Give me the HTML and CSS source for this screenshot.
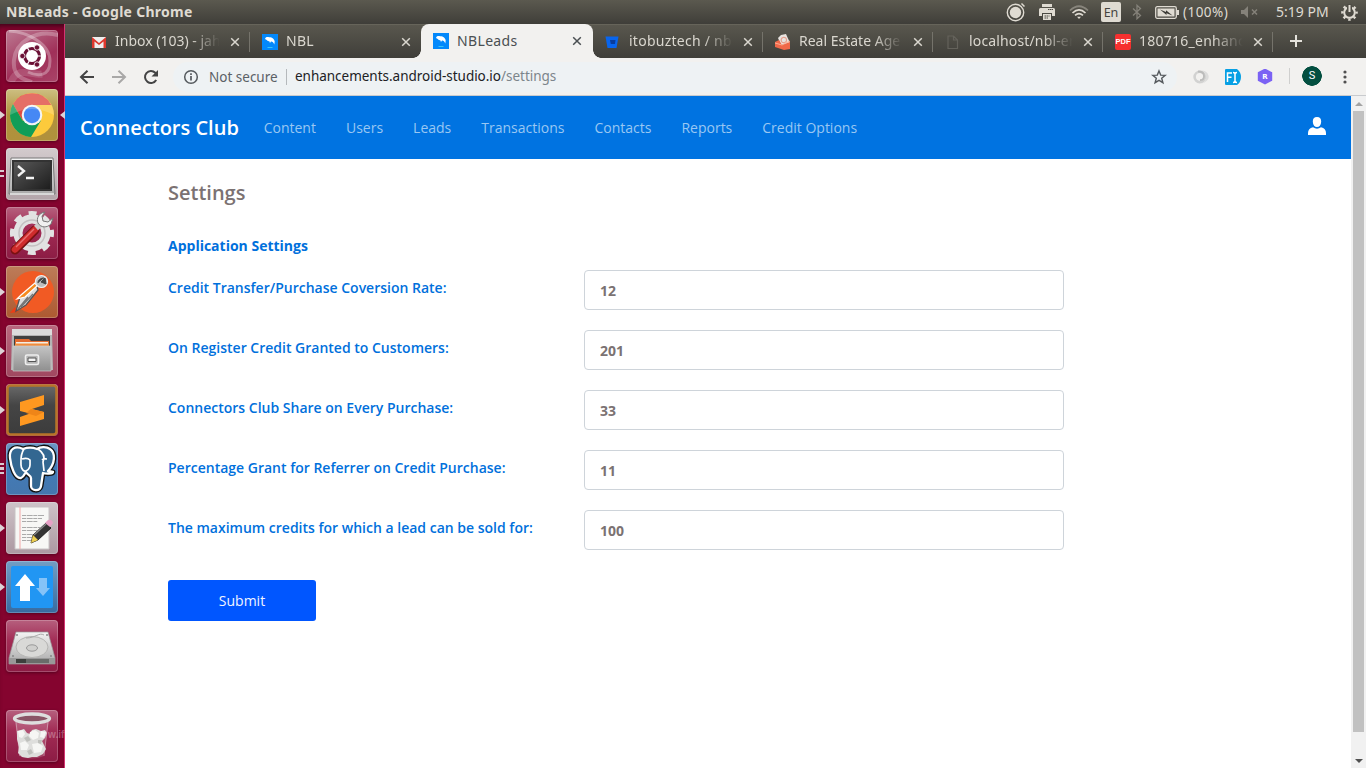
FILE: index.html
```html
<!DOCTYPE html>
<html lang="en">
<head>
<meta charset="utf-8">
<title>NBLeads</title>
<link rel="stylesheet" href="styles.css">
</head>
<body>
<svg width="0" height="0" class="defs">
  <defs>
    <linearGradient id="metal" x1="0" y1="0" x2="0" y2="1"><stop offset="0" stop-color="#f4f4f4"/><stop offset="1" stop-color="#a9a9a9"/></linearGradient>
    <linearGradient id="cabinet" x1="0" y1="0" x2="0" y2="1"><stop offset="0" stop-color="#c4c4c4"/><stop offset="1" stop-color="#8f8f8f"/></linearGradient>
    <linearGradient id="screen" x1="0" y1="0" x2="1" y2="1"><stop offset="0" stop-color="#5a5a5a"/><stop offset="1" stop-color="#1c1c1c"/></linearGradient>
    <linearGradient id="sub" x1="0" y1="0" x2="0" y2="1"><stop offset="0" stop-color="#696969"/><stop offset=".4" stop-color="#454545"/><stop offset="1" stop-color="#3c3c3c"/></linearGradient>
    <symbol id="close" viewBox="0 0 10 10"><path d="M1.2 1.2l7.6 7.6M8.8 1.2L1.2 8.8" stroke="currentColor" stroke-width="1.5"/></symbol>
    <symbol id="nbl" viewBox="0 0 16 16"><path fill="#0388fb" d="M0 0h16v16H0z"/><path fill="#fff" d="M3 5C3.500 3 5.500 3 7 3.200 10 3 12.500 5 12.700 7.500L12.300 10.500C11.500 8.500 10.500 7.500 9 7.600L8 9 7.300 7.200C6 7.500 5.200 6.500 4.800 6z"/><path fill="#39c4f5" d="M5.500 13h5v1h-5z"/></symbol>
  </defs>
</svg>

<header class="panel">
  <span class="panel-title">NBLeads - Google Chrome</span>
  <div class="indicators">
    <svg class="i-rec" width="20" height="20" viewBox="0 0 20 20"><circle cx="9.500" cy="10.500" r="8.200" fill="none" stroke="#dfdbd2" stroke-width="1.400"/><circle cx="9.500" cy="10.500" r="5.700" fill="#dfdbd2"/><path d="M15.500 1.500l3 3" stroke="#dfdbd2" stroke-width="1.500"/></svg>
    <svg class="i-print" width="16" height="16" viewBox="0 0 16 16"><path fill="#dfdbd2" d="M3 0h10v3H3zM1.500 4h13A1.500 1.500 0 0 1 16 5.500V12h-3V9H3v3H0V5.500A1.500 1.500 0 0 1 1.500 4zM4 10h8v6H4z"/><path d="M9 5.500h5M5.500 12h5M5.500 14h4" stroke="#4b4a43" stroke-dasharray="1.500 .5"/></svg>
    <svg class="i-wifi" width="20" height="15" viewBox="0 0 20 15" fill="none" stroke-width="1.700"><path d="M1 5.500Q10-3 19 5.500" stroke="#88857c"/><path d="M3.500 8Q10 1.800 16.500 8M6 10.300Q10 6.800 14 10.300" stroke="#dfdbd2"/><path d="M8 11.800h4L10 14z" fill="#dfdbd2" stroke="none"/></svg>
    <span class="lang">En</span>
    <svg class="i-bt" width="10" height="16" viewBox="0 0 10 16"><path d="M1 4.500l7.500 7L5 14.700V1.300l3.500 3.200-7.500 7" fill="none" stroke="#85827a" stroke-width="1.300"/></svg>
    <svg class="i-bat" width="24" height="13" viewBox="0 0 24 13"><rect x=".7" y=".7" width="20.600" height="11.600" rx="1.500" fill="none" stroke="#dfdbd2" stroke-width="1.300"/><path fill="#dfdbd2" d="M2.500 2.500h17v8h-17zM22 4h2v5h-2z"/><path d="M5 3.500l6 2.500V4.200l6.500 5.300-6-2.300v1.900z" fill="#3b3a35"/></svg>
    <span class="pct">(100%)</span>
    <svg class="i-vol" width="18" height="12" viewBox="0 0 18 12"><path fill="#85827a" d="M0 4h3l4-4v12L3 8H0z"/><path d="M11 3.500l5 5M16 3.500l-5 5" stroke="#85827a" stroke-width="1.500"/></svg>
    <span class="clock">5:19 PM</span>
    <svg class="i-gear" width="17" height="17" viewBox="0 0 17 17"><circle cx="8.500" cy="8.500" r="5.300" fill="none" stroke="#dfdbd2" stroke-width="2"/><circle cx="8.500" cy="8.500" r="7.100" fill="none" stroke="#dfdbd2" stroke-width="2.400" stroke-dasharray="2.400 3.176" stroke-dashoffset="1.200"/><path fill="#4f4d45" d="M6 0h5v7.500H6z"/><path d="M8.500 1v7" stroke="#dfdbd2" stroke-width="2"/></svg>
  </div>
</header>

<div class="desktop">
<aside class="launcher">
  <div class="tile dash"><svg viewBox="0 0 52 52"><g fill="none" stroke="#fff"><path d="M52 5C30-1 10 12 8 30S20 50 26 52" opacity=".25" stroke-width="4"/><path d="M3 1C22 2 44 14 44 31S30 46 22 42" opacity=".3" stroke-width="3"/><path d="M5 52C12 35 26 46 36 44" opacity=".15" stroke-width="7"/></g><circle cx="26" cy="26" r="14" fill="#fff"/><circle cx="26" cy="26" r="7.500" fill="none" stroke="#6b1035" stroke-width="3.200"/><g stroke="#fff" stroke-width="1.200"><path d="M26 26l10 0M26 26l-5-9M26 26l-5 9"/></g><circle cx="26" cy="26" r="5.500" fill="#fff"/><g fill="#6b1035" stroke="#fff" stroke-width=".8"><circle cx="16.400" cy="26" r="2.700"/><circle cx="31" cy="17.500" r="2.700"/><circle cx="31" cy="34.500" r="2.700"/></g></svg></div>
  <div class="tile chrome running focused"><svg viewBox="0 0 52 52"><circle cx="26" cy="26" r="22" fill="#fcca3c"/><path fill="#df4b40" d="M7 15A22 22 0 0 1 45.300 16H26L16.500 31.500z"/><path fill="#109d58" d="M7 15A22 22 0 0 0 25 48l10-16.500-18.500 0z"/><circle cx="26" cy="26" r="10.300" fill="#f4f4f4"/><circle cx="26" cy="26" r="8.200" fill="#4688f4"/><path fill="#fff" opacity=".2" d="M4 26a22 22 0 0 1 44 0Q26 14 4 26z"/></svg></div>
  <div class="tile term running double"><svg viewBox="0 0 52 52"><path d="M5 10h42l2 36H3z" fill="url(#metal)" stroke="#777"/><path d="M7 13h38v29H7z" fill="url(#screen)" stroke="#333" stroke-width="2"/><path d="M12 18l6 5-6 5M20 30h8" fill="none" stroke="#f4f4f4" stroke-width="2.300"/><path d="M4 46h44" stroke="#d8d8d8" stroke-width="2"/></svg></div>
  <div class="tile tools"><svg viewBox="0 0 52 52"><circle cx="26" cy="26" r="14" fill="none" stroke="#e2e2e2" stroke-width="9"/><circle cx="26" cy="26" r="19.800" fill="none" stroke="#e2e2e2" stroke-width="4.500" stroke-dasharray="8 7.550" stroke-dashoffset="4"/><circle cx="26" cy="26" r="13" fill="none" stroke="#c4c0c2" stroke-width="1.500"/><path d="M9 43l20-20" stroke="#7a1111" stroke-width="9" stroke-linecap="round"/><path d="M9 42.500L29 22.500" stroke="#cf2c2c" stroke-width="6.500" stroke-linecap="round"/><path d="M10 40L28 22" stroke="#ea7070" stroke-width="1.500"/><path d="M30 21l8-7" stroke="#ccc" stroke-width="6"/><path d="M39 5c-6 1-9 6-7 11 3 5 9 5 13 1l2-6-5 4-5-1-1-5z" fill="#f0f0f0" stroke="#777"/></svg></div>
  <div class="tile postman running"><svg viewBox="0 0 52 52"><circle cx="27" cy="26" r="21" fill="#f15a24"/><path fill="#ed3d16" d="M4 47l5-6 3 5z"/><path d="M30 17L14 31l-4 14 10-6 12-15z" fill="#ddd" stroke="#555" stroke-width="1.300"/><path d="M29 17L15 29l-4 4 8-2 12-11z" fill="#f68b1f" stroke="#fff" stroke-width="1.200"/><path d="M12 43l10-12M15 41l12-13" stroke="#777" stroke-width="1.500"/><circle cx="35.500" cy="15.500" r="6" fill="#bdbdbd" stroke="#eee" stroke-width="1.200"/><path d="M35 16l4-4 1 6zM32 17c0-4 4-5 6-5" fill="#444" stroke="#444"/></svg></div>
  <div class="tile files running"><svg viewBox="0 0 52 52"><path d="M6 5h40l1 40H5z" fill="#b4b4b4"/><path d="M6 4h40v6H6z" fill="#dcdcdc"/><path d="M8 11h36v14H8z" fill="#414141"/><path d="M9 14h14l2 2h18v9H9z" fill="#e36b30"/><path d="M10 17h32v3H10z" fill="#f3eee4"/><path d="M9 18.500h34v3H9z" fill="#f18c3c"/><path d="M7 21h38v25H7z" fill="url(#cabinet)" stroke="#ccc" stroke-width=".7"/><rect x="19.500" y="30" width="13" height="9.500" rx="1.500" fill="#b5b5b5" stroke="#eee" stroke-width="1.600"/><path d="M22 33h8v3.500h-8z" fill="#f4f4f4" stroke="#555"/></svg></div>
  <div class="tile sublime running"><svg viewBox="0 0 52 52"><rect x="1.500" y="1.500" width="49" height="49" rx="3" fill="url(#sub)" stroke="#b87428" stroke-width="2.500"/><path d="M14 18l24-7v10l-12 4 12 3v7l-24 7v-9l10-3.500L14 27z" fill="#ff9820"/><path d="M25 25l13 3-8 4-10-3z" fill="#ef8518"/></svg></div>
  <div class="tile pg running triple"><svg viewBox="0 0 52 52"><path fill="#336791" stroke="#111" stroke-width="5" stroke-linejoin="round" d="M17 6C9 2 3 6 4 15s5 21 11 20c3-1 4-5 5-6 1 3 5 3 5 6v8c0 5 9 6 10 0l2-13c3 1 10 1 10-1l-5-1c7-7 8-18 2-22-4-3-10-2-13 0-5-2-9-2-14 0z"/><path fill="#336791" stroke="#fff" stroke-width="2.300" stroke-linejoin="round" d="M17 6C9 2 3 6 4 15s5 21 11 20c3-1 4-5 5-6 1 3 5 3 5 6v8c0 5 9 6 10 0l2-13c3 1 10 1 10-1l-5-1c7-7 8-18 2-22-4-3-10-2-13 0-5-2-9-2-14 0z"/><path d="M18 6c-4 6-3 11-3 16 0 4 3 7 5 6 5-2 4-7 4-11-2-2-5-2-8-1M32 6c6 4 7 9 5 13l1 9M36 17c2-2 3-1 5-1" fill="none" stroke="#fff" stroke-width="1.700"/></svg></div>
  <div class="tile editor running"><svg viewBox="0 0 52 52"><path d="M9 5h34v42H9z" fill="#f7f7f5" stroke="#c7c3c4"/><path d="M14 5v42" stroke="#f3a8a8" stroke-width="1"/><path d="M16 13.500h22M16 16.500h20M16 19.500h16M16 25.500h18M16 28.500h15M16 32.500h13M16 35.500h10M16 38.500h9" stroke="#aaa" stroke-width="1" stroke-dasharray="4 .7 6 .6"/><path d="M25 41l2-8 13-12 5 5-13 12z" fill="#333" stroke="#111" stroke-width=".8"/><path d="M25 41l2-8 5 5z" fill="#edce51"/><path d="M39 21l3-3q4-1 5 3l-3 4z" fill="#e7a1c6"/><path d="M28 33l12-11" stroke="#888" stroke-width="1.300"/></svg></div>
  <div class="tile transfer running"><svg viewBox="0 0 52 52"><rect x="5" y="5" width="42" height="42" rx="2" fill="#2196f3"/><path d="M19 13l10 12h-5v15H14V25H9z" fill="#fff"/><path d="M33 17h8v10h3l-7 8-7-8h3z" fill="#85c3f8"/></svg></div>
  <div class="tile disk"><svg viewBox="0 0 52 52"><path d="M10 12h32l7 26v6H3v-6z" fill="url(#metal)" stroke="#999" stroke-width=".7"/><path d="M3 38h46v6H3z" fill="#999"/><path d="M10 39h33v4H10z" fill="#6a6c6a"/><path d="M10 39h10v4H10z" fill="#3d403d"/><ellipse cx="26" cy="27" rx="16" ry="10.500" fill="#d9d9d7" stroke="#b5b5b3"/><ellipse cx="26" cy="28" rx="5.500" ry="3.200" fill="#cfcfcd" stroke="#999"/><path d="M38 15C33 12 30 18 20 18" fill="none" stroke="#aaa"/><g fill="#888"><circle cx="11" cy="15" r="1"/><circle cx="41" cy="15" r="1"/><circle cx="7" cy="36" r="1"/><circle cx="45" cy="36" r="1"/></g></svg></div>
  <div class="tile trash"><svg viewBox="0 0 52 52"><path d="M9 9l4 37q13 5 25 0l5-37z" fill="#fff" opacity=".16"/><path d="M11 21l4-1 3-1 3 4 3 1 2-4 4-1 5 2 4-1 2 3-2 5-3 3 2 4 2 4-3 5-6 3-5 0-4 1-6-1-4-4 1-6-1-4-1-4z" fill="#dededc"/><g fill="#f6f6f4"><path d="M12 21l5-1 2 4-3 4-3-1zM24 22l5-2 4 3-1 5-5 2-4-4zM35 21l5 1-2 6-4-1zM14 33l5-2 4 4-2 5-6 0zM26 34l6-1 5 3-2 6-7 1z"/></g><g fill="#bfc0bc"><path d="M18 28l4-2 3 4-4 2zM32 30l4 0-1 4-3-1zM21 41l4-2 2 4-4 2z"/></g><ellipse cx="26" cy="8.500" rx="17.500" ry="4.500" fill="#8a5566" stroke="#dedede" stroke-width="3.300"/><path d="M10 12l4 34M42 12l-4 34" stroke="#e8dbe0" opacity=".45"/></svg></div>
  <span class="watermark">w.if</span>
</aside>

<main class="browser">
  <div class="tabs">
    <div class="tab"><svg class="fav" viewBox="0 0 16 16"><path d="M1 3h14v11H1z" fill="#eee"/><path d="M1 14V3l7 6 7-6v11h-2.500V7.500L8 11 3.500 7.500V14z" fill="#dd382d"/></svg><span class="label t-inbox">Inbox (103) - jah</span><svg class="x"><use href="#close"/></svg></div>
    <div class="tab"><svg class="fav"><use href="#nbl"/></svg><span class="label t-nbl">NBL</span><svg class="x"><use href="#close"/></svg></div>
    <div class="tab active"><svg class="fav"><use href="#nbl"/></svg><span class="label">NBLeads</span><svg class="x"><use href="#close"/></svg></div>
    <div class="tab"><svg class="fav" viewBox="0 0 16 16"><path fill="#0865ee" d="M.5 2.500h13l-2 11.500h-9z"/><path fill="#083c9c" d="M5 6h5.500L10 10H5.800z"/></svg><span class="label t-ito">itobuztech / nbl</span><svg class="x"><use href="#close"/></svg></div>
    <div class="tab"><svg class="fav" viewBox="0 0 16 16"><path d="M3 4l3-3 5-1 4 9-9 2z" fill="#e8e3df"/><path d="M8 3.500c4-1 5 5 1 5M8 3.500c-3 1-2 6 1 5" fill="none" stroke="#e5a090" stroke-width="1.200"/><path d="M0 8l4-2 3 5 8-3v7l-6 1-9-3z" fill="#f0694a"/><path d="M0 9l7 2 8-4" stroke="#ffad91" fill="none"/></svg><span class="label t-real">Real Estate Age</span><svg class="x"><use href="#close"/></svg></div>
    <div class="tab"><svg class="fav" viewBox="0 0 16 16"><path d="M3 2h5.500l4 4v8.500H3zM8.500 2v4h4" fill="none" stroke="#64625b" stroke-width="1.200"/></svg><span class="label t-local">localhost/nbl-en</span><svg class="x"><use href="#close"/></svg></div>
    <div class="tab"><span class="fav pdf">PDF</span><span class="label t-pdf">180716_enhanc</span><svg class="x"><use href="#close"/></svg></div>
    <svg class="plus" width="12" height="12"><path d="M6 0v12M0 6h12" stroke="#e4e2dc" stroke-width="2"/></svg>
  </div>
  <div class="toolbar">
    <svg class="nav-ico" viewBox="0 0 16 16"><path d="M15 8H2.500M8.500 1.800L2 8l6.500 6.200" fill="none" stroke="#444" stroke-width="2"/></svg>
    <svg class="nav-ico" viewBox="0 0 16 16"><path d="M1 8h12.500M7.500 1.800L14 8l-6.500 6.200" fill="none" stroke="#a9a8a7" stroke-width="2"/></svg>
    <svg class="nav-ico" viewBox="0 0 16 16"><path d="M13.200 11A6 6 0 1 1 12.300 3.800l1 1" fill="none" stroke="#444" stroke-width="2"/><path d="M15 1v6.500H8.500z" fill="#444"/></svg>
    <div class="omnibox">
      <svg class="info" viewBox="0 0 16 16"><circle cx="8" cy="8" r="6.300" fill="none" stroke="#555a5e" stroke-width="1.500"/><path d="M8 7v4.500M8 4.200v1.700" stroke="#555a5e" stroke-width="1.700"/></svg>
      <span class="secure">Not secure</span>
      <span class="url">enhancements.android-studio.io<i>/settings</i></span>
      <svg class="star" viewBox="0 0 16 16"><path d="M8 1.900l1.700 4.200 4.500.3-3.500 2.900 1.200 4.400L8 11.300l-3.900 2.400 1.200-4.400-3.500-2.900 4.500-.3z" fill="none" stroke="#555a5e" stroke-width="1.400"/></svg>
    </div>
    <svg class="ext" viewBox="0 0 16 16"><circle cx="6.800" cy="8" r="5.200" fill="none" stroke="#d2d2d1" stroke-width="2.600"/><path d="M8 1.500q6 0 7.500 5T8 15q5-2 5-7T8 1.500z" fill="#dcdcdb"/><path d="M5 2.500q6 0 6 4.500T7 11" fill="none" stroke="#bcbcbb" stroke-width="1.800"/></svg>
    <svg class="ext" viewBox="0 0 16 16"><path d="M1 0h11q4 3 4 8t-4 8H1q-1 0-1-1V1q0-1 1-1z" fill="#07a0e4"/><path d="M2.500 13V4H7M2.500 8.200h4M8 3.500q2 0 2 1.500 0-1.500 2-1.500M10 5v7M8 13.500q2 0 2-1.500 0 1.500 2 1.500" fill="none" stroke="#fff" stroke-width="1.500"/></svg>
    <span class="ext hex">R</span>
    <span class="avatar">S</span>
    <svg class="dots" width="4" height="14" fill="#505050"><circle cx="2" cy="2" r="1.600"/><circle cx="2" cy="7" r="1.600"/><circle cx="2" cy="12" r="1.600"/></svg>
  </div>
  <div class="viewport">
    <div class="page">
      <nav class="navbar">
        <a class="brand">Connectors Club</a>
        <a>Content</a><a>Users</a><a>Leads</a><a>Transactions</a><a>Contacts</a><a>Reports</a><a>Credit Options</a>
        <svg class="user" width="18" height="18" viewBox="0 0 18 18"><path fill="#fff" d="M9 0c3 0 4.300 2 4.200 4.700C13 8 11.300 10 9 10S5 8 4.800 4.700C4.700 2 6 0 9 0zM5 10.300Q9 13 13 10.300 18 11.500 18 16v2H0v-2q0-4.500 5-5.700z"/></svg>
      </nav>
      <section class="content">
        <h1>Settings</h1>
        <h2>Application Settings</h2>
        <form>
          <div class="row"><label>Credit Transfer/Purchase Coversion Rate:</label><input value="12"></div>
          <div class="row"><label>On Register Credit Granted to Customers:</label><input value="201"></div>
          <div class="row"><label>Connectors Club Share on Every Purchase:</label><input value="33"></div>
          <div class="row"><label>Percentage Grant for Referrer on Credit Purchase:</label><input value="11"></div>
          <div class="row"><label>The maximum credits for which a lead can be sold for:</label><input value="100"></div>
          <button type="button">Submit</button>
        </form>
      </section>
    </div>
    <div class="scrollbar"><span class="arrow up"></span><span class="thumb"></span><span class="arrow down"></span></div>
  </div>
</main>
</div>
</body>
</html>
```
FILE: styles.css
```css
* { box-sizing: border-box; }
body { margin: 0; width: 1366px; height: 768px; overflow: hidden; font-family: "Open Sans", sans-serif; background: #fff; }
.defs { position: absolute; }
svg { display: block; flex: none; }

.panel { height: 24px; display: flex; align-items: center; justify-content: space-between; padding: 0 8px 0 6px; background: linear-gradient(#5b594f, #3f3e39); color: #dfdbd2; font: 14px/24px "Noto Sans", sans-serif; white-space: nowrap; }
.panel-title { font-weight: 700; font-size: 14px; letter-spacing: .27px; }
.indicators { display: flex; align-items: center; }
.i-rec { margin-right: 13px; }
.i-print { margin-right: 14px; }
.i-wifi { margin-right: 12px; }
.lang { width: 20px; height: 20px; border-radius: 2px; background: #dfdbd2; color: #45443e; font-size: 12.500px; line-height: 21px; text-align: center; margin-right: 11px; }
.i-bt { margin-right: 13px; }
.i-bat { margin-right: 4px; }
.pct { width: 46px; margin-right: 12px; font-size: 13.500px; letter-spacing: .45px; }
.i-vol { margin-right: 17px; }
.clock { width: 53px; margin-right: 12px; font-size: 14px; }

.desktop { display: flex; height: 744px; }
.launcher { width: 65px; padding: 6px 0 6px 6px; display: flex; flex-direction: column; gap: 7px; background: #85042f; border-right: 1px solid #d43572; position: relative; box-shadow: inset 0 5px 5px -3px #3e0418; }
.tile { width: 52px; height: 52px; border-radius: 4px; position: relative; flex: none; background: linear-gradient(#b6607e, #a22c55 40%, #8c1c44); box-shadow: inset 0 0 0 1px rgba(255,255,255,.22), 0 1px 3px rgba(40,0,15,.5); }
.tile svg { width: 52px; height: 52px; }
.dash { background: linear-gradient(150deg, #bd7b93, #a03059 60%, #a94468); }
.chrome { background: linear-gradient(#cdbf82, #b0923d 50%, #b0913c); }
.term { background: linear-gradient(#d3cbcd, #b3a5aa); }
.postman { background: linear-gradient(#bd7c59, #ad5a31); }
.files { background: linear-gradient(#b9687e, #a04860); }
.editor { background: linear-gradient(#cec3c8, #ac98a1); }
.pg { background: linear-gradient(#6e97c4, #427bb8 45%, #4577ad); }
.transfer { background: linear-gradient(#739ec4, #376ba0); }
.trash { margin-top: auto; }
.running::before { content: ""; position: absolute; left: -6px; top: 22px; border: 4px solid transparent; border-left: 5px solid #ddd3d6; border-right: 0; }
.focused::after { content: ""; position: absolute; right: -7px; top: 22px; border: 4px solid transparent; border-right: 5px solid #ddd3d6; border-left: 0; }
.double::before, .triple::before { border: 0; width: 4px; height: 7px; background: linear-gradient(#d9cbd0 2px, transparent 2px, transparent 5px, #d9cbd0 5px); }
.triple::before { top: 20px; height: 11px; background: linear-gradient(#d9cbd0 2px, transparent 2px, transparent 4px, #d9cbd0 4px, #d9cbd0 7px, transparent 7px, transparent 9px, #d9cbd0 9px); }
.watermark { position: absolute; left: 48px; bottom: 26px; width: 17px; overflow: hidden; color: rgba(255,255,255,.3); font: 700 10px/14px "Liberation Sans", sans-serif; }

.browser { width: 1301px; display: flex; flex-direction: column; }
.tabs { height: 34px; padding-left: 14px; display: flex; border-top: 1px solid #66645a; background: linear-gradient(#59574e, #3f3e39); color: #dad7cf; }
.tab { width: 170px; flex: none; display: flex; align-items: center; padding: 0 10px 0 12px; position: relative; font: 14px/33px "Noto Sans", sans-serif; }
.tab:nth-child(1), .tab:nth-child(2) { width: 171px; }
.tab:not(.active)::after { content: ""; position: absolute; right: 0; top: 7px; height: 20px; width: 1px; background: #75736b; }
.tab:nth-child(2)::after { display: none; }
.fav { width: 16px; height: 16px; margin-right: 8px; flex: none; }
.label { flex: 1; min-width: 0; overflow: hidden; white-space: nowrap; margin: -2px 8px 0 0; }
.tab:not(.active) .label { -webkit-mask-image: linear-gradient(90deg, #000 70%, transparent 98%); mask-image: linear-gradient(90deg, #000 70%, transparent 98%); }
.tab .t-nbl { letter-spacing: .3px; }
.t-ito { letter-spacing: .25px; }
.t-local { letter-spacing: .15px; }
.t-pdf { letter-spacing: .25px; }
.x { width: 10px; height: 10px; }
.active { width: 172px; padding-right: 11px; background: #f2f1ef; color: #4a4f52; border-radius: 8px 8px 0 0; margin-top: -1px; height: 34px; z-index: 1; }
.active .label { letter-spacing: .35px; }
.active::before, .active::after { content: ""; position: absolute; bottom: 0; width: 8px; height: 8px; }
.active::before { left: -8px; background: radial-gradient(circle at 0 0, transparent 7.500px, #f2f1ef 8px); }
.active::after { right: -8px; background: radial-gradient(circle at 100% 0, transparent 7.500px, #f2f1ef 8px); }
.pdf { background: #f6302f; border-radius: 2px; color: #fff; font: 700 7.500px/16px "Liberation Sans", sans-serif; text-align: center; }
.plus { margin: 10px 0 0 17px; }

.toolbar { height: 38px; display: flex; align-items: center; background: #f2f1ef; border-bottom: 1px solid #c9cbce; padding-left: 14px; }
.nav-ico { width: 16px; height: 16px; margin-right: 16px; }
.omnibox { width: 1004px; height: 30px; border-radius: 15px; background: #eef2f4; display: flex; align-items: center; padding: 0 10px; margin: 0 16px 0 -2px; font: 14px/30px "Noto Sans", sans-serif; white-space: nowrap; }
.info { width: 16px; height: 16px; margin-right: 10px; }
.secure { width: 77px; color: #5b6166; font-size: 13.500px; }
.url { border-left: 1px solid #b5b9bc; padding-left: 8px; height: 16px; line-height: 15px; color: #202124; font-size: 13.500px; letter-spacing: -.02px; }
.url i { font-style: normal; color: #7c858b; }
.star { width: 16px; height: 16px; margin-left: auto; }
.ext { width: 16px; height: 16px; margin-right: 16px; flex: none; }
.hex { background: #7b62f4; clip-path: polygon(50% 0, 95% 24%, 95% 76%, 50% 100%, 5% 76%, 5% 24%); color: #fff; font: 700 7px/16px "DejaVu Sans", sans-serif; text-align: center; }
.avatar { width: 33px; height: 20px; padding-left: 13px; margin: -1px 21px 0 0; background: radial-gradient(circle 10px at 23px 10px, #034f40 9.500px, transparent 10px), linear-gradient(#cfcfce, #cfcfce) 0 2px / 1px 16px no-repeat; color: #fff; font: 11px/20px Roboto, sans-serif; text-align: center; }

.viewport { flex: 1; display: flex; min-height: 0; }
.page { width: 1286px; background: #fff; }
.navbar { height: 63px; background: #0073e1; display: flex; align-items: center; gap: 30px; padding: 0 25px 0 15px; color: #99c7f3; font-size: 14px; }
.navbar .brand { color: #fff; font-size: 20px; font-weight: 600; margin-right: -5px; width: 158.700px; white-space: nowrap; }
.user { margin-left: auto; margin-bottom: 3px; }
.content { padding: 19px 0 0 103px; }
h1 { margin: 0; font-size: 20px; font-weight: 600; line-height: 30px; color: #7b7272; }
h2 { margin: 28px 0 14px; font-size: 14px; font-weight: 700; line-height: 20px; color: #0070dc; }
.row { display: flex; height: 40px; margin-bottom: 20px; }
.row label { width: 416px; font-size: 14px; font-weight: 600; line-height: 36px; color: #0070dc; }
.row input { width: 480px; height: 40px; border: 1px solid #ced4da; border-radius: 4px; padding: 0 15px; font: 700 14px "Open Sans", sans-serif; color: #7b7272; background: #fff; }
button { display: block; margin-top: 30px; width: 148px; height: 41px; padding: 0; border: 0; border-radius: 3px; background: #0056ff; color: #f1f5ff; font: 14px "Open Sans", sans-serif; }
.scrollbar { width: 15px; background: #f1f1f1; display: flex; flex-direction: column; align-items: center; }
.arrow { height: 15px; display: flex; align-items: center; }
.arrow::before { content: ""; border: 4px solid transparent; border-top: 0; border-bottom-color: #a3a3a3; }
.down { margin-top: auto; }
.down::before { border: 4px solid transparent; border-bottom: 0; border-top-color: #505050; }
.thumb { width: 11px; height: 621px; background: #c1c1c1; }
```
